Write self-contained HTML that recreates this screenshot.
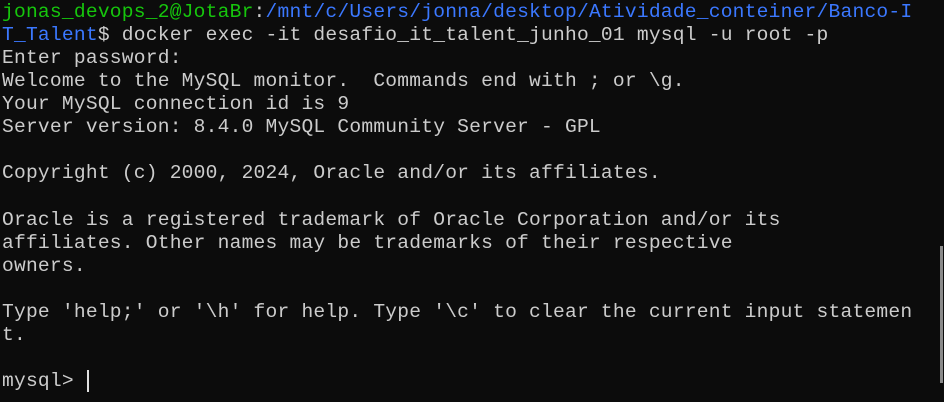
<!DOCTYPE html>
<html><head><meta charset="utf-8"><style>
html,body{margin:0;padding:0;background:#0c0c0c;width:944px;height:402px;overflow:hidden}
pre{margin:0;position:absolute;left:2px;top:1px;font-family:"Liberation Mono",monospace;font-size:19.6px;letter-spacing:0.22px;line-height:23.06px;color:#cccccc;white-space:pre}
.g{color:#16c60c}.b{color:#3b78ff}
.cur{position:absolute;left:87px;top:370px;width:2px;height:22px;background:#e0e0e0}
.sb{position:absolute;left:940px;top:246px;width:3px;height:137px;background:#8a8a8a}
</style></head><body>
<pre><span class="g">jonas_devops_2@JotaBr</span>:<span class="b">/mnt/c/Users/jonna/desktop/Atividade_conteiner/Banco-I
T_Talent</span>$ docker exec -it desafio_it_talent_junho_01 mysql -u root -p
Enter password:
Welcome to the MySQL monitor.  Commands end with ; or \g.
Your MySQL connection id is 9
Server version: 8.4.0 MySQL Community Server - GPL

Copyright (c) 2000, 2024, Oracle and/or its affiliates.

Oracle is a registered trademark of Oracle Corporation and/or its
affiliates. Other names may be trademarks of their respective
owners.

Type 'help;' or '\h' for help. Type '\c' to clear the current input statemen
t.

mysql> </pre>
<div class="cur"></div>
<div class="sb"></div>
</body></html>
